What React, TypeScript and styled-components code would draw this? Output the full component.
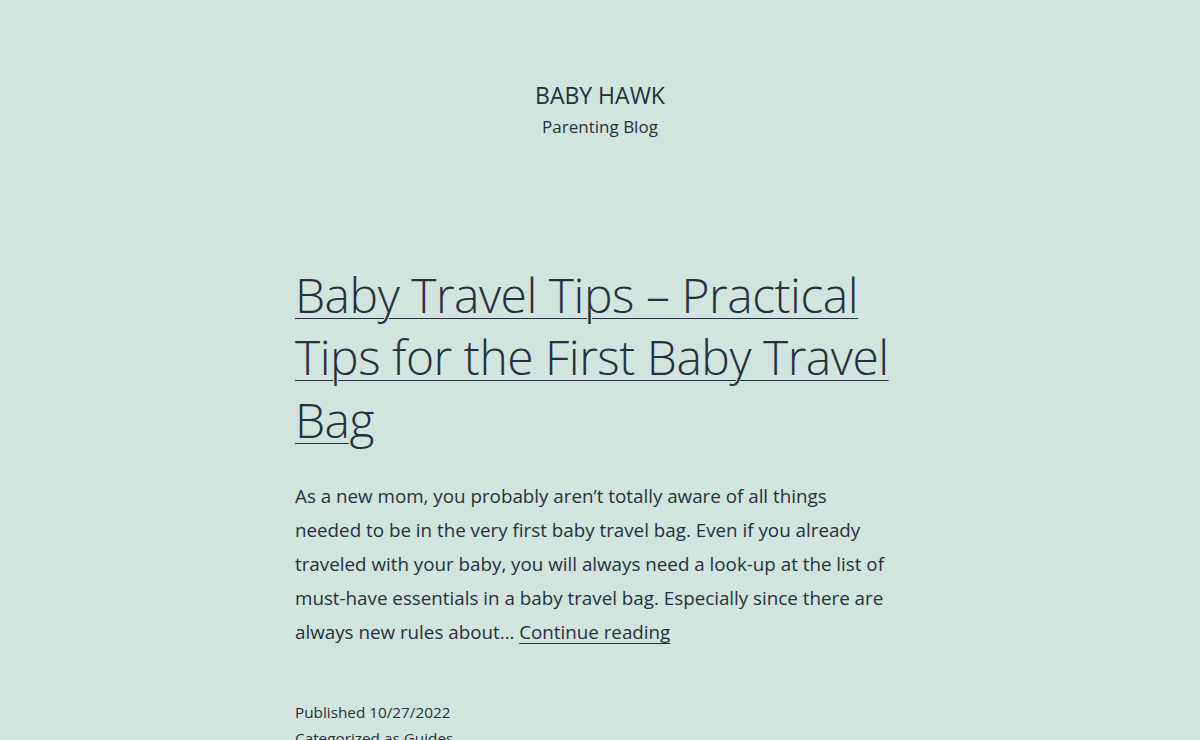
import styled, { createGlobalStyle } from 'styled-components';

const GlobalStyle = createGlobalStyle`
  html, body {
    margin: 0;
    padding: 0;
    background: #d1e4dd;
  }
  body {
    color: #28303d;
    font-family: "Open Sans", "Noto Sans", sans-serif;
    -webkit-font-smoothing: antialiased;
  }
`;

const Page = styled.div`
  min-height: 740px;
  display: flex;
  flex-direction: column;
  align-items: center;
`;

const SiteHeader = styled.header`
  padding-top: 80px;
  display: flex;
  flex-direction: column;
  align-items: center;
`;

const SiteTitle = styled.div`
  font-size: 23px;
  line-height: 31px;
  font-weight: 400;
  text-transform: uppercase;
`;

const SiteDescription = styled.div`
  font-size: 17px;
  line-height: 30px;
  padding-top: 1px;
`;

const Main = styled.main`
  width: 610px;
  margin-top: 122px;
`;

const EntryTitle = styled.h2`
  margin: 0;
  font-size: 48px;
  line-height: 62.4px;
  font-weight: 350;
  letter-spacing: -0.48px;

  a {
    color: inherit;
    text-decoration: underline;
    text-decoration-thickness: 1px;
    text-underline-offset: 5px;
  }
`;

const Excerpt = styled.p`
  margin: 28px 0 0;
  max-width: 602px;
  font-size: 18.8px;
  line-height: 34px;

  a {
    color: inherit;
    text-decoration-thickness: 1px;
    text-underline-offset: 4px;
  }
`;

const EntryFooter = styled.footer`
  margin-top: 50px;
  font-size: 15.3px;
  line-height: 26px;
`;

export default function App() {
  return (
    <Page>
      <GlobalStyle />
      <SiteHeader>
        <SiteTitle>Baby Hawk</SiteTitle>
        <SiteDescription>Parenting Blog</SiteDescription>
      </SiteHeader>
      <Main>
        <article>
          <EntryTitle>
            <a href="#">Baby Travel Tips – Practical Tips for the First Baby Travel Bag</a>
          </EntryTitle>
          <Excerpt>
            As a new mom, you probably aren’t totally aware of all things needed to be in the very
            first baby travel bag. Even if you already traveled with your baby, you will always need
            a look-up at the list of must-have essentials in a baby travel bag. Especially since
            there are always new rules about… <a href="#">Continue reading</a>
          </Excerpt>
          <EntryFooter>
            <div>Published 10/27/2022</div>
            <div>Categorized as Guides</div>
          </EntryFooter>
        </article>
      </Main>
    </Page>
  );
}
